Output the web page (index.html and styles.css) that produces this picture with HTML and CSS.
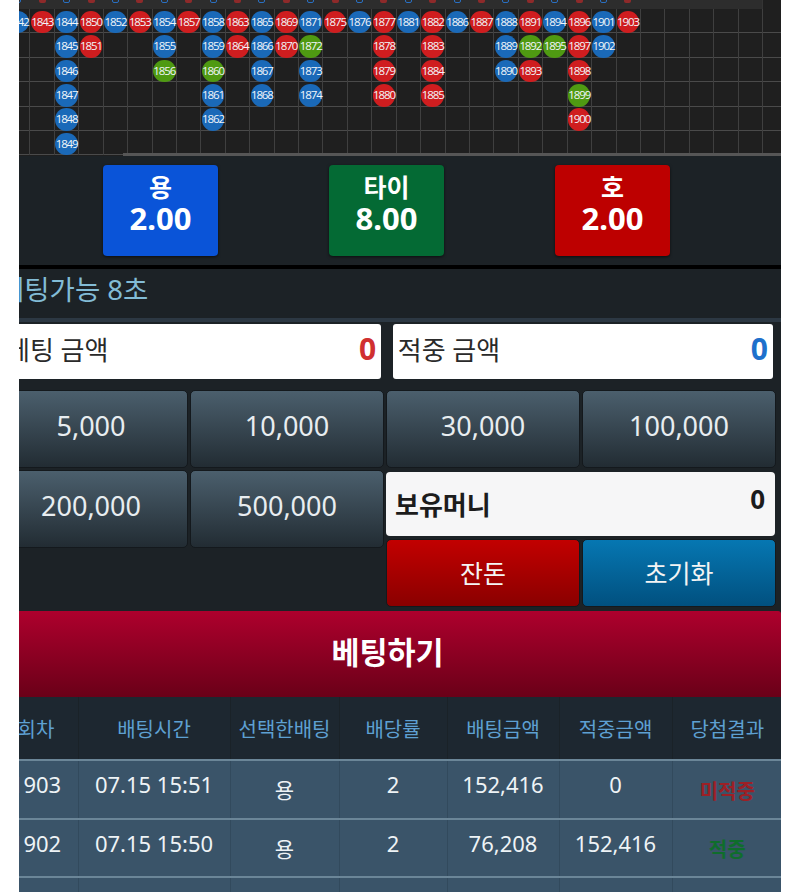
FILE: index.html
```html
<!DOCTYPE html>
<html lang="ko">
<head>
<meta charset="utf-8">
<title>베팅</title>
<link rel="stylesheet" href="styles.css">
</head>
<body>
<div class="frame">
  <section class="road">
    <div class="col"><i class="tick tb"></i><span class="bead b">1842</span></div>
    <div class="col"><i class="tick tr"></i><span class="bead r">1843</span></div>
    <div class="col"><i class="tick tb"></i><span class="bead b">1844</span><span class="bead b">1845</span><span class="bead b">1846</span><span class="bead b">1847</span><span class="bead b">1848</span><span class="bead b">1849</span></div>
    <div class="col"><i class="tick tr"></i><span class="bead r">1850</span><span class="bead r">1851</span></div>
    <div class="col"><i class="tick tb"></i><span class="bead b">1852</span></div>
    <div class="col"><i class="tick tr"></i><span class="bead r">1853</span></div>
    <div class="col"><i class="tick tb"></i><span class="bead b">1854</span><span class="bead b">1855</span><span class="bead g">1856</span></div>
    <div class="col"><i class="tick tr"></i><span class="bead r">1857</span></div>
    <div class="col"><i class="tick tb"></i><span class="bead b">1858</span><span class="bead b">1859</span><span class="bead g">1860</span><span class="bead b">1861</span><span class="bead b">1862</span></div>
    <div class="col"><i class="tick tr"></i><span class="bead r">1863</span><span class="bead r">1864</span></div>
    <div class="col"><i class="tick tb"></i><span class="bead b">1865</span><span class="bead b">1866</span><span class="bead b">1867</span><span class="bead b">1868</span></div>
    <div class="col"><i class="tick tr"></i><span class="bead r">1869</span><span class="bead r">1870</span></div>
    <div class="col"><i class="tick tb"></i><span class="bead b">1871</span><span class="bead g">1872</span><span class="bead b">1873</span><span class="bead b">1874</span></div>
    <div class="col"><i class="tick tr"></i><span class="bead r">1875</span></div>
    <div class="col"><i class="tick tb"></i><span class="bead b">1876</span></div>
    <div class="col"><i class="tick tr"></i><span class="bead r">1877</span><span class="bead r">1878</span><span class="bead r">1879</span><span class="bead r">1880</span></div>
    <div class="col"><i class="tick tb"></i><span class="bead b">1881</span></div>
    <div class="col"><i class="tick tr"></i><span class="bead r">1882</span><span class="bead r">1883</span><span class="bead r">1884</span><span class="bead r">1885</span></div>
    <div class="col"><i class="tick tb"></i><span class="bead b">1886</span></div>
    <div class="col"><i class="tick tr"></i><span class="bead r">1887</span></div>
    <div class="col"><i class="tick tb"></i><span class="bead b">1888</span><span class="bead b">1889</span><span class="bead b">1890</span></div>
    <div class="col"><i class="tick tr"></i><span class="bead r">1891</span><span class="bead g">1892</span><span class="bead r">1893</span></div>
    <div class="col"><i class="tick tb"></i><span class="bead b">1894</span><span class="bead g">1895</span></div>
    <div class="col"><i class="tick tr"></i><span class="bead r">1896</span><span class="bead r">1897</span><span class="bead r">1898</span><span class="bead g">1899</span><span class="bead r">1900</span></div>
    <div class="col"><i class="tick tb"></i><span class="bead b">1901</span><span class="bead b">1902</span></div>
    <div class="col"><i class="tick tr"></i><span class="bead r">1903</span></div>
    <div class="scrollbar"></div>
  </section>

  <section class="picks">
    <button class="pick pick-blue"><span class="pick-name">용</span><span class="pick-odds">2.00</span></button>
    <button class="pick pick-green"><span class="pick-name">타이</span><span class="pick-odds">8.00</span></button>
    <button class="pick pick-red"><span class="pick-name">호</span><span class="pick-odds">2.00</span></button>
  </section>

  <section class="status">베팅가능 8초</section>

  <section class="amounts">
    <div class="amount"><span>베팅 금액</span><b class="val-red">0</b></div>
    <div class="amount"><span>적중 금액</span><b class="val-blue">0</b></div>
  </section>

  <section class="chips">
    <button class="chip">5,000</button>
    <button class="chip">10,000</button>
    <button class="chip">30,000</button>
    <button class="chip">100,000</button>
    <button class="chip">200,000</button>
    <button class="chip">500,000</button>
    <div class="wallet-stack">
      <div class="wallet"><span>보유머니</span><b>0</b></div>
      <div class="actions">
        <button class="act act-red">잔돈</button>
        <button class="act act-blue">초기화</button>
      </div>
    </div>
  </section>

  <button class="submit">베팅하기</button>

  <table class="history">
    <thead>
      <tr>
        <th class="c1">회차</th><th class="c2">배팅시간</th><th class="c3">선택한배팅</th><th class="c4">배당률</th><th class="c5">배팅금액</th><th class="c6">적중금액</th><th class="c7">당첨결과</th>
      </tr>
    </thead>
    <tbody>
      <tr><td>1903</td><td>07.15 15:51</td><td class="ko">용</td><td>2</td><td>152,416</td><td>0</td><td class="lose">미적중</td></tr>
      <tr><td>1902</td><td>07.15 15:50</td><td class="ko">용</td><td>2</td><td>76,208</td><td>152,416</td><td class="win">적중</td></tr>
      <tr><td>&nbsp;</td><td></td><td></td><td></td><td></td><td></td><td></td></tr>
    </tbody>
  </table>
</div>
</body>
</html>
```
FILE: styles.css
```css
* { box-sizing: border-box; }
html, body { margin: 0; padding: 0; background: #fff; }
body { font-family: "Noto Sans", "Noto Sans CJK KR", sans-serif; }
button { font-family: inherit; cursor: pointer; }

.frame {
  margin-left: 19px;
  width: 762px;
  height: 892px;
  overflow: hidden;
  background: #1c2226;
}

/* bead road */
.road {
  position: relative;
  display: flex;
  margin-left: -13.4px;
  width: 775.4px;
  height: 156px;
  overflow: hidden;
  background-color: #1f1f1f;
  background-image:
    linear-gradient(#2d2d2d, #2d2d2d),
    repeating-linear-gradient(to right, transparent 0, transparent 23.42px, #3f3f3f 23.42px, #3f3f3f 24.42px),
    repeating-linear-gradient(to bottom, transparent 0, transparent 23.4px, #4a4a4a 23.4px, #4a4a4a 24.4px);
  background-size: 756.6px 9px, 100% 155px, 100% 146.4px;
  background-position: 0 0, 0 0, 0 9.4px;
  background-repeat: no-repeat;
}
.col {
  flex: 0 0 24.42px;
  display: flex;
  flex-direction: column;
  align-items: center;
}
.tick {
  display: block;
  flex: 0 0 auto;
  width: 7px;
  height: 7px;
  margin-top: -4px;
  margin-bottom: 7px;
  border-radius: 2px;
}
.tb { border: 1px solid #2a6fc0; }
.tr { background: #8e2a2a; }
.bead {
  flex: 0 0 auto;
  width: 22.6px;
  height: 22.6px;
  margin: 0.9px 0;
  border-radius: 50%;
  color: #f2f6fa;
  font-family: "Open Sans", sans-serif;
  font-size: 11.5px;
  letter-spacing: -1.1px;
  line-height: 22.6px;
  text-align: center;
  white-space: nowrap;
}
.b { background: #1a69b8; }
.r { background: #cf1d1f; }
.g { background: #4f9a12; }
.scrollbar {
  position: absolute;
  left: 117.4px;
  right: 0;
  top: 153px;
  height: 3px;
  background: #565656;
}

/* pick buttons */
.picks {
  display: flex;
  gap: 111px;
  height: 109px;
  padding: 8.5px 0 0 84px;
  background: #1c2226;
}
.pick {
  display: flex;
  flex-direction: column;
  align-items: center;
  width: 115px;
  height: 91.5px;
  padding: 7px 0 0;
  border: 0;
  border-radius: 4px;
  color: #fff;
  font-weight: 700;
  box-shadow: 0 1px 3px rgba(0, 0, 0, .6);
}
.pick-name { font-size: 25px; line-height: 30px; }
.pick-odds { font-size: 31px; line-height: 32px; }
.pick-blue { background: #0a54d8; }
.pick-green { background: #046a34; }
.pick-red { background: #bd0000; }

/* status */
.status {
  height: 57px;
  margin-left: -20px;
  padding-top: 2px;
  border-top: 4px solid #000;
  border-bottom: 4px solid #2c3843;
  background: #1c2226;
  color: #82bcd6;
  font-size: 27.5px;
  line-height: 38px;
  white-space: nowrap;
}

/* amounts */
.amounts {
  display: flex;
  gap: 11.5px;
  margin-left: -18px;
  padding-top: 1.5px;
}
.amount {
  display: flex;
  justify-content: space-between;
  align-items: center;
  flex: 0 0 380.25px;
  height: 55.5px;
  padding: 0 5px;
  border-radius: 3px;
  background: #fff;
  color: #2a2a2a;
  font-size: 26px;
}
.amount b { font-size: 30px; line-height: 1; margin-top: -5px; }
.amount span { margin-top: -4px; }
.val-red { color: #d03030; }
.val-blue { color: #1e70cc; }

/* chips */
.chips {
  display: grid;
  grid-template-columns: repeat(4, 194px);
  grid-template-rows: 78px 141px;
  column-gap: 2px;
  row-gap: 2px;
  width: 787px;
  margin-left: -25px;
  margin-top: 11px;
}
.chip {
  height: 78px;
  padding: 0 0 8px;
  border: 1px solid #14191d;
  border-radius: 5px;
  background: linear-gradient(#4b5f6d, #222c33);
  color: #e8edf0;
  font-size: 27px;
}
.wallet-stack {
  grid-column: 3 / span 2;
  display: flex;
  flex-direction: column;
  gap: 3px;
}
.wallet {
  display: flex;
  justify-content: space-between;
  height: 64px;
  margin: 2px 1px 0 0;
  padding: 0 10px 0 9px;
  border-radius: 4px;
  background: #f6f6f7;
  color: #1c1c1c;
  font-size: 26px;
}
.wallet span { font-weight: 700; line-height: 66px; }
.wallet b { line-height: 54px; }
.actions {
  display: flex;
  gap: 2px;
}
.act {
  flex: 0 0 194px;
  height: 68px;
  padding: 0 0 2px;
  border: 1px solid #14191d;
  border-radius: 5px;
  color: #f4f4f4;
  font-size: 25px;
}
.act-red { background: linear-gradient(#c20000, #8a0000); }
.act-blue { background: linear-gradient(#0677b2, #01507f); }

/* submit */
.submit {
  display: block;
  width: 787px;
  height: 86px;
  margin: 0 0 0 -25px;
  padding: 0 0 6px;
  border: 0;
  border-radius: 3px 3px 0 0;
  background: linear-gradient(#ae002d, #6a0018);
  color: #fff;
  font-size: 30.5px;
  font-weight: 700;
}

/* history */
.history {
  width: 788px;
  margin-left: -25.5px;
  table-layout: fixed;
  border-collapse: collapse;
}
.history th {
  height: 63px;
  padding: 0;
  border-left: 1px solid #1a2228;
  background: #1d2730;
  color: #5ea0d2;
  font-size: 20px;
  font-weight: 400;
}
.c1 { width: 84px; }
.c2 { width: 152px; }
.c3 { width: 109px; }
.c4 { width: 108px; }
.c5 { width: 112px; }
.c6 { width: 113px; }
.c7 { width: 110px; }
.history td {
  height: 58.5px;
  padding: 0 0 10px;
  border-top: 2px solid #6b8698;
  border-left: 1px solid #324a5d;
  background: #3a5469;
  color: #eef3f6;
  font-size: 22px;
  text-align: center;
  white-space: nowrap;
}
.history td.ko { padding: 0; font-size: 21px; }
.history td.lose,
.history td.win {
  padding: 2px 0 0;
  font-size: 20px;
  font-weight: 700;
}
.history td.lose { color: #9c2026; }
.history td.win { color: #0f6d2c; }
```
